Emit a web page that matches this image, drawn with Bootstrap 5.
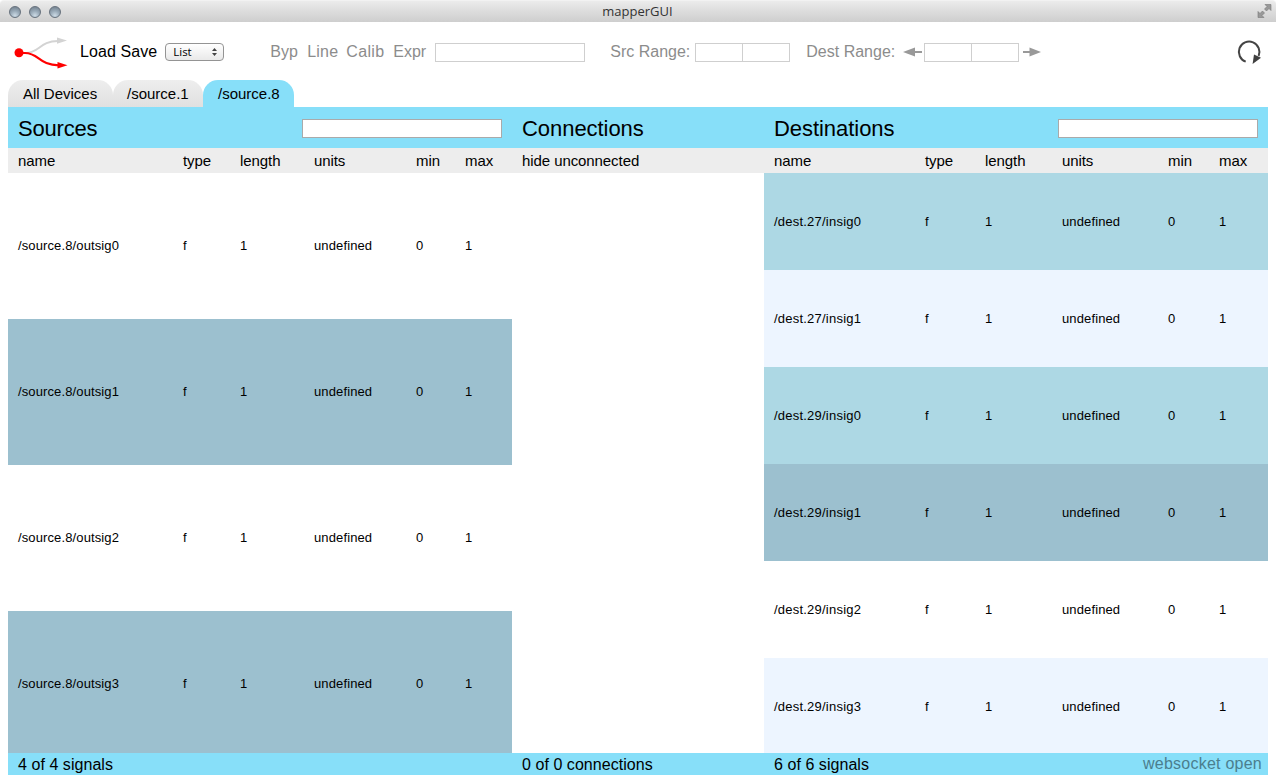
<!DOCTYPE html>
<html lang="en">
<head>
<meta charset="utf-8">
<title>mapperGUI</title>
<link href="https://cdn.jsdelivr.net/npm/bootstrap@5.3.0/dist/css/bootstrap.min.css" rel="stylesheet">
<script src="https://cdn.jsdelivr.net/npm/bootstrap@5.3.0/dist/js/bootstrap.bundle.min.js"></script>
<style>
body{font-family:"Liberation Sans",Arial,sans-serif;font-size:16px;line-height:20px;color:#000;background:#fff;height:778px;overflow:hidden}
svg{display:block;flex:none}
.titlebar{height:22px;background:linear-gradient(#ececec,#e2e2e2 30%,#cecece);border-top:1px solid #f2f2f2;border-radius:4px 4px 0 0;font:13px/20px "Open Sans",sans-serif;color:#333;padding:0 4px 0 9px}
.window-title{margin-right:6px;height:21px}
.dots{width:100px;gap:8px}
.dots i{width:12px;height:12px;border-radius:50%;border:1px solid #66717d;background:radial-gradient(circle at 50% 85%,#cddbe6,#9aabb9 45%,#74828f 90%)}
.dots-end{width:100px}
.toolbar{height:58px;padding:2px 13px 0 12px;white-space:nowrap}
.logo{margin-top:-1px}
.load-save{letter-spacing:.08px}
.mode-select{width:59px;height:18px;border:1px solid #949494;border-radius:4px;background:linear-gradient(#fff,#f4f4f4 50%,#e9e9e9);font:500 11.5px/14px "Open Sans",sans-serif;padding:0 6px 1px 7px;margin-left:8px}
.dim{color:#8c8c8c}
.modes{width:165px;margin-left:46px}
.modes div:nth-child(1){width:37px}
.modes div:nth-child(2){width:39px;letter-spacing:.2px}
.modes div:nth-child(3){width:47px;letter-spacing:.35px}
.field{height:19px;border:1px solid #cfcfcf;background:#fff;flex:none}
.expression{width:150px;margin-right:25px}
.range{width:95px}
.range i{width:47px;border-right:1px solid #cfcfcf}
.src-range{margin-left:5px}
.arrow-left{margin:0 1px 0 8px}
.arrow-right{margin:0 0 0 4px}
.reload{margin-top:-1px}
.tabs{height:27px;margin-left:8px;font-size:15px;line-height:27px}
.tab{background:linear-gradient(#eee,#e0e0e0);border-radius:15px 15px 0 0;padding-left:15px}
.tab-all{width:105px}
.tab-one{width:90px;padding-left:14px}
.tab.current{background:#87dff9;width:91px}
.panels{margin:0 8px;height:646px}
.side{width:504px}
.middle{width:252px}
.panel-title{height:41px;background:#87dff9;font-size:22px;line-height:43px;padding:0 10px;letter-spacing:-.05px}
.src .panel-title{letter-spacing:-.2px}
.search{width:200px;height:19px;border:1px solid #aaa;background:#fff;margin-top:12px}
.sig{display:grid;padding-left:10px;align-items:center}
.src .sig{grid-template-columns:165px 57px 74px 102px 49px 1fr}
.dst .sig{grid-template-columns:151px 60px 77px 106px 51px 1fr}
.head{height:25px;background:#ededed;font-size:15px;line-height:26px;letter-spacing:-.08px}
.rows{height:580px;overflow:hidden;font-size:13px;line-height:17px;letter-spacing:.12px}
.dst .rows .sig>:first-child{letter-spacing:.22px}
.src .rows .sig{height:146px;padding-bottom:1px}
.dst .rows .sig{height:97px}
.bg-steel{background:#9cc0cf}
.bg-pale{background:#add8e4}
.bg-ice{background:#edf5ff}
.status{margin:0 8px;height:22px;background:#87dff9;line-height:23px;letter-spacing:.05px}
.status div{padding-left:10px}
.ws{color:#4b7e8e;letter-spacing:.24px;padding-right:6px;line-height:21px}
</style>
</head>
<body>
<header class="titlebar d-flex align-items-center justify-content-between">
  <div class="dots d-flex"><i></i><i></i><i></i></div>
  <div class="window-title">mapperGUI</div>
  <div class="dots-end d-flex justify-content-end">
    <svg width="15" height="15" viewBox="0 0 15 15" fill="#999" stroke="#777" stroke-width=".6"><path d="M8 .5h6v6l-2-2-2.500 2.500-2-2L10 2.500z"/><path d="M1 7.500l2 2L5.500 7l2 2L5 11.500l2 2H1z"/></svg>
  </div>
</header>

<nav class="toolbar d-flex align-items-center">
  <svg class="logo" width="60" height="40" viewBox="12 32 60 40" fill="none"><path d="M26 53C39 53 40 41 58 41" stroke="#d3d3d3" stroke-width="2"/><path d="M57 37.500l10 3-10 3.200z" fill="#d3d3d3"/><path d="M19 53h6C39 53 39 65.300 59 65.300" stroke="red" stroke-width="2.200"/><path d="M57.500 62l10 3.300-10 3.200z" fill="red"/><circle cx="19" cy="52.700" r="4.500" fill="red"/></svg>
  <div class="load-save ms-2">Load Save</div>
  <div class="mode-select d-flex justify-content-between align-items-center">List
    <svg width="5" height="8" viewBox="0 0 5 8" fill="#444"><path d="M0 3l2.500-3L5 3zM0 5l2.500 3L5 5z"/></svg>
  </div>
  <div class="dim d-flex align-items-center">
    <div class="modes d-flex"><div>Byp</div><div>Line</div><div>Calib</div><div>Expr</div></div>
    <div class="field expression"></div>
    <div>Src Range:</div>
    <div class="field range src-range d-flex"><i></i></div>
    <div class="ms-3">Dest Range:</div>
    <svg class="arrow-left" width="20" height="10" viewBox="0 0 20 10"><path d="M0 5l12-4.500v9z" fill="#999"/><path d="M12 5h7" stroke="#999" stroke-width="2"/></svg>
    <div class="field range d-flex"><i></i></div>
    <svg class="arrow-right" width="19" height="10" viewBox="0 0 19 10"><path d="M18 5L6.500 .5v9z" fill="#999"/><path d="M0 5h7" stroke="#999" stroke-width="2"/></svg>
  </div>
  <svg class="reload ms-auto" width="28" height="28" viewBox="1235 38 28 28"><path d="M1245.700 61.600A10.300 10.300 0 1 1 1258.600 56" fill="none" stroke="#444" stroke-width="2"/><path d="M1254 54.500l7 3.200-8.400 6.300z" fill="#3f3f3f"/></svg>
</nav>

<div class="tabs d-flex">
  <div class="tab tab-all">All Devices</div>
  <div class="tab tab-one">/source.1</div>
  <div class="tab current">/source.8</div>
</div>

<main class="panels d-flex">
  <section class="side src">
    <div class="panel-title d-flex justify-content-between align-items-start"><div>Sources</div><div class="search"></div></div>
    <div class="sig head"><div>name</div><div>type</div><div>length</div><div>units</div><div>min</div><div>max</div></div>
    <div class="rows">
      <div class="sig"><div>/source.8/outsig0</div><div>f</div><div>1</div><div>undefined</div><div>0</div><div>1</div></div>
      <div class="sig bg-steel"><div>/source.8/outsig1</div><div>f</div><div>1</div><div>undefined</div><div>0</div><div>1</div></div>
      <div class="sig"><div>/source.8/outsig2</div><div>f</div><div>1</div><div>undefined</div><div>0</div><div>1</div></div>
      <div class="sig bg-steel"><div>/source.8/outsig3</div><div>f</div><div>1</div><div>undefined</div><div>0</div><div>1</div></div>
    </div>
  </section>
  <section class="middle">
    <div class="panel-title">Connections</div>
    <div class="sig head">hide unconnected</div>
  </section>
  <section class="side dst">
    <div class="panel-title d-flex justify-content-between align-items-start"><div>Destinations</div><div class="search"></div></div>
    <div class="sig head"><div>name</div><div>type</div><div>length</div><div>units</div><div>min</div><div>max</div></div>
    <div class="rows">
      <div class="sig bg-pale"><div>/dest.27/insig0</div><div>f</div><div>1</div><div>undefined</div><div>0</div><div>1</div></div>
      <div class="sig bg-ice"><div>/dest.27/insig1</div><div>f</div><div>1</div><div>undefined</div><div>0</div><div>1</div></div>
      <div class="sig bg-pale"><div>/dest.29/insig0</div><div>f</div><div>1</div><div>undefined</div><div>0</div><div>1</div></div>
      <div class="sig bg-steel"><div>/dest.29/insig1</div><div>f</div><div>1</div><div>undefined</div><div>0</div><div>1</div></div>
      <div class="sig"><div>/dest.29/insig2</div><div>f</div><div>1</div><div>undefined</div><div>0</div><div>1</div></div>
      <div class="sig bg-ice"><div>/dest.29/insig3</div><div>f</div><div>1</div><div>undefined</div><div>0</div><div>1</div></div>
    </div>
  </section>
</main>

<footer class="status d-flex">
  <div class="side">4 of 4 signals</div>
  <div class="middle">0 of 0 connections</div>
  <div class="side d-flex justify-content-between">6 of 6 signals<span class="ws">websocket open</span></div>
</footer>
</body>
</html>
